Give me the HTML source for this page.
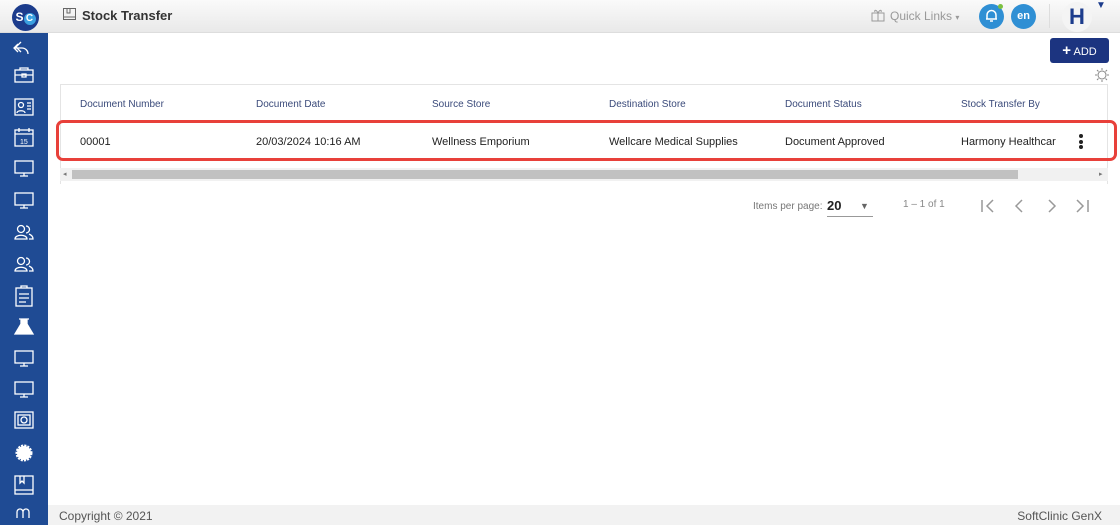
<!DOCTYPE html>
<html><head><meta charset="utf-8"><style>
*{margin:0;padding:0;box-sizing:border-box}
body{width:1120px;height:525px;overflow:hidden;font-family:"Liberation Sans",sans-serif;background:#fff;position:relative}
.top{position:absolute;left:0;top:0;width:1120px;height:33px;background:linear-gradient(#fafafa,#e9e9e9);border-bottom:1px solid #ddd}
.side{position:absolute;left:0;top:33px;width:48px;height:492px;background:#1f4b94}
.ic{position:absolute;left:14px;width:20px;height:20px}
.abs{position:absolute}
.hd{font-size:10px;color:#3a4a7a;top:99px}
.cell{font-size:11px;color:#222;top:136px}
.foot{position:absolute;left:48px;top:505px;width:1072px;height:20px;background:#f2f2f2;font-size:12px;color:#555}
</style></head><body>
<div class="top">
 <div class="abs" style="left:12px;top:4px;width:27px;height:27px;border-radius:50%;background:#1c3c8c;color:#fff;font-weight:bold;font-size:12px;line-height:27px;text-align:center">S<span style="display:inline-block;background:#3ba0e0;border-radius:50%;width:12px;height:12px;line-height:12px;font-size:10px">C</span></div>
 <svg class="abs" style="left:63px;top:8px" width="13" height="12"><rect x="0.5" y="0.5" width="12" height="11" fill="none" stroke="#666"/><path d="M4 1v4h3V1M1 9h11" stroke="#666" fill="none"/></svg>
 <div class="abs" style="left:82px;top:8px;font-size:13px;font-weight:bold;color:#333">Stock Transfer</div>
 <svg class="abs" style="left:871px;top:8px" width="14" height="14"><rect x="1" y="5" width="12" height="8" fill="none" stroke="#999"/><path d="M1 5h12M7 5v8M7 5C5 1 3 2 4 4M7 5c2-4 4-3 3-1" stroke="#999" fill="none"/></svg>
 <div class="abs" style="left:890px;top:9px;font-size:12px;color:#999">Quick Links <span style="font-size:8px">▾</span></div>
 <div class="abs" style="left:979px;top:4px;width:25px;height:25px;border-radius:50%;background:#2f8fd4"></div>
 <svg class="abs" style="left:985px;top:9px" width="13" height="14"><path d="M2 10V6a4.5 4.5 0 0 1 9 0v4zM1 10h11M5 12h3" stroke="#fff" fill="none" stroke-width="1.5"/></svg>
 <div class="abs" style="left:998px;top:4px;width:5px;height:5px;border-radius:50%;background:#7cc040"></div>
 <div class="abs" style="left:1011px;top:4px;width:25px;height:25px;border-radius:50%;background:#2f8fd4;color:#fff;font-size:11px;font-weight:bold;text-align:center;line-height:25px">en</div>
 <div class="abs" style="left:1049px;top:4px;width:1px;height:24px;background:#ddd"></div>
 <div class="abs" style="left:1062px;top:2px;width:30px;height:30px;border-radius:50%;background:#f4f4f4;color:#1c3c8c;font-size:22px;font-weight:bold;text-align:center;line-height:30px">H</div>
 <div class="abs" style="left:1096px;top:0px;font-size:10px;color:#1c3c8c">▼</div>
</div>
<div class="side">
 <svg width="48" height="492" fill="none" stroke="#fff" stroke-width="1.3">
  <path d="M18 11l-4 4 4 4M14 15h8a6 6 0 0 1 6 6"/><path d="M21 9l-5 5 5 5"/>
  <rect x="15" y="37" width="18" height="12"/><path d="M20 37v-2h8v2M15 42h18M22 41h4v3h-4z"/>
  <rect x="15" y="66" width="18" height="16"/><circle cx="21" cy="72" r="2.5"/><path d="M17 80c0-3 8-3 8 0M27 70h4M27 73h4M27 76h4"/>
  <rect x="15" y="97" width="18" height="16"/><path d="M15 101h18M19 95v4M29 95v4"/><text x="20" y="111" font-size="7" fill="#fff" stroke="none">15</text>
  <rect x="15" y="128" width="18" height="12"/><path d="M24 140v3M20 143h8"/>
  <rect x="15" y="160" width="18" height="12"/><path d="M24 172v3M20 175h8"/>
  <circle cx="21" cy="196" r="3.5"/><path d="M15 206c0-5 12-5 12 0zM26 193a3.5 3.5 0 1 1 0 7M29 206h4c0-3-2-4-4-5"/>
  <circle cx="21" cy="228" r="3.5"/><path d="M15 238c0-5 12-5 12 0zM26 225a3.5 3.5 0 1 1 0 7M29 238h4c0-3-2-4-4-5"/>
  <rect x="16" y="255" width="16" height="18"/><path d="M21 255v-2h6v2M19 261h10M19 265h10M19 269h7"/>
  <path d="M21 286v5l-6 10h18l-6-10v-5M19 286h10" fill="#fff"/>
  <rect x="15" y="318" width="18" height="12"/><path d="M24 330v3M20 333h8"/>
  <rect x="15" y="349" width="18" height="12"/><path d="M24 361v3M20 364h8"/>
  <rect x="15" y="379" width="18" height="16"/><rect x="18" y="382" width="12" height="10"/><circle cx="24" cy="387" r="3"/>
  <circle cx="24" cy="420" r="7" fill="#fff" stroke-dasharray="2 1" stroke-width="3"/>
  <rect x="15" y="443" width="18" height="18"/><path d="M15 457h18M20 443v7l2-2 2 2v-7"/>
  <path d="M17 485v-6a3 3 0 0 1 6 0v6M23 485v-6a3 3 0 0 1 6 0v6"/>
 </svg>
</div>
<div class="abs" style="left:1050px;top:38px;width:59px;height:25px;background:#1c3480;border-radius:3px;color:#fff;font-size:11px;line-height:25px;text-align:center"><b style="font-size:15px">+</b> ADD</div>
<svg class="abs" style="left:1095px;top:68px" width="14" height="14"><circle cx="7" cy="7" r="4" fill="none" stroke="#888"/><path d="M7 0v2M7 12v2M0 7h2M12 7h2M2 2l1.5 1.5M10.5 10.5L12 12M2 12l1.5-1.5M10.5 3.5L12 2" stroke="#888"/></svg>
<div class="abs" style="left:60px;top:84px;width:1048px;height:100px;border:1px solid #e4e4e4;border-bottom:none"></div>
<div class="abs hd" style="left:80px">Document Number</div>
<div class="abs hd" style="left:256px">Document Date</div>
<div class="abs hd" style="left:432px">Source Store</div>
<div class="abs hd" style="left:609px">Destination Store</div>
<div class="abs hd" style="left:785px">Document Status</div>
<div class="abs hd" style="left:961px">Stock Transfer By</div>
<div class="abs" style="left:56px;top:120px;width:1061px;height:41px;border:3px solid #e8403a;border-radius:7px"></div>
<div class="abs cell" style="left:80px">00001</div>
<div class="abs cell" style="left:256px">20/03/2024 10:16 AM</div>
<div class="abs cell" style="left:432px">Wellness Emporium</div>
<div class="abs cell" style="left:609px">Wellcare Medical Supplies</div>
<div class="abs cell" style="left:785px">Document Approved</div>
<div class="abs cell" style="left:961px;width:95px;overflow:hidden;white-space:nowrap">Harmony Healthcare</div>
<div class="abs" style="left:1079px;top:134px;width:4px"><div style="width:4px;height:4px;border-radius:50%;background:#222;margin-bottom:1.5px"></div><div style="width:4px;height:4px;border-radius:50%;background:#222;margin-bottom:1.5px"></div><div style="width:4px;height:4px;border-radius:50%;background:#222"></div></div>
<div class="abs" style="left:60px;top:168px;width:1048px;height:13px;background:#f1f1f1"></div>
<div class="abs" style="left:72px;top:170px;width:946px;height:9px;background:#c1c1c1"></div>
<div class="abs" style="left:63px;top:170px;font-size:7px;color:#777">◂</div>
<div class="abs" style="left:1099px;top:170px;font-size:7px;color:#777">▸</div>
<div class="abs" style="left:753px;top:201px;font-size:10px;color:#777">Items per page:</div>
<div class="abs" style="left:827px;top:198px;font-size:13px;font-weight:bold;color:#222">20</div>
<div class="abs" style="left:860px;top:201px;font-size:9px;color:#666">▼</div>
<div class="abs" style="left:827px;top:216px;width:46px;height:1px;background:#999"></div>
<div class="abs" style="left:903px;top:199px;font-size:10px;color:#888">1 – 1 of 1</div>
<svg class="abs" style="left:975px;top:196px" width="120" height="20" fill="none" stroke="#999" stroke-width="1.5"><path d="M7 4v12M18 4l-6 6 6 6M47 4l-6 6 6 6M74 4l6 6-6 6M102 4l6 6-6 6M113 4v12"/></svg>
<div class="foot"><span class="abs" style="left:11px;top:4px">Copyright © 2021</span><span class="abs" style="right:18px;top:4px">SoftClinic GenX</span></div>
</body></html>
